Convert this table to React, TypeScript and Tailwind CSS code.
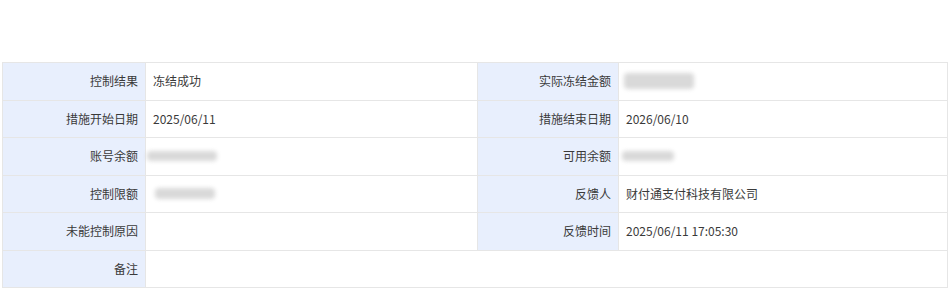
import React from "react";

const Blur = ({ w, ml = 0, h = 12 }: { w: number; ml?: number; h?: number }) => (
  <div className="flex items-center" style={{ marginLeft: ml }}>
    <div className="bg-[#d9d9d9] blur-[2px] rounded-sm" style={{ width: w, height: h }} />
  </div>
);

const Label = ({ children }: { children?: React.ReactNode }) => (
  <div className="bg-[#e8effd] border-r border-b border-[#e6e6e6] flex items-center justify-end pr-[7px] text-[12px] text-[#3a3a3a]">
    {children}
  </div>
);

const Value = ({ children, span = false }: { children?: React.ReactNode; span?: boolean }) => (
  <div
    className={
      "bg-white border-r border-b border-[#e6e6e6] flex items-center pl-[7px] text-[12px] text-[#3a3a3a] " +
      (span ? "col-span-3" : "")
    }
  >
    {children}
  </div>
);

export default function App() {
  return (
    <div
      className="w-[951px] h-[290px] bg-white pt-[62px] pl-[2px]"
      style={{ fontFamily: '"Noto Sans CJK SC", "Noto Sans", sans-serif' }}
    >
      <div className="w-[946px] grid grid-cols-[143px_332px_141px_1fr] auto-rows-[37.5px] border-t border-l border-[#e6e6e6]">
        <Label>控制结果</Label>
        <Value>冻结成功</Value>
        <Label>实际冻结金额</Label>
        <Value>
          <Blur w={70} h={16} ml={-2} />
        </Value>

        <Label>措施开始日期</Label>
        <Value>2025/06/11</Value>
        <Label>措施结束日期</Label>
        <Value>2026/06/10</Value>

        <Label>账号余额</Label>
        <Value>
          <Blur w={70} ml={-6} h={10} />
        </Value>
        <Label>可用余额</Label>
        <Value>
          <Blur w={52} ml={-4} h={10} />
        </Value>

        <Label>控制限额</Label>
        <Value>
          <Blur w={60} ml={2} h={11} />
        </Value>
        <Label>反馈人</Label>
        <Value>财付通支付科技有限公司</Value>

        <Label>未能控制原因</Label>
        <Value />
        <Label>反馈时间</Label>
        <Value>2025/06/11 17:05:30</Value>

        <Label>备注</Label>
        <Value span />
      </div>
    </div>
  );
}
